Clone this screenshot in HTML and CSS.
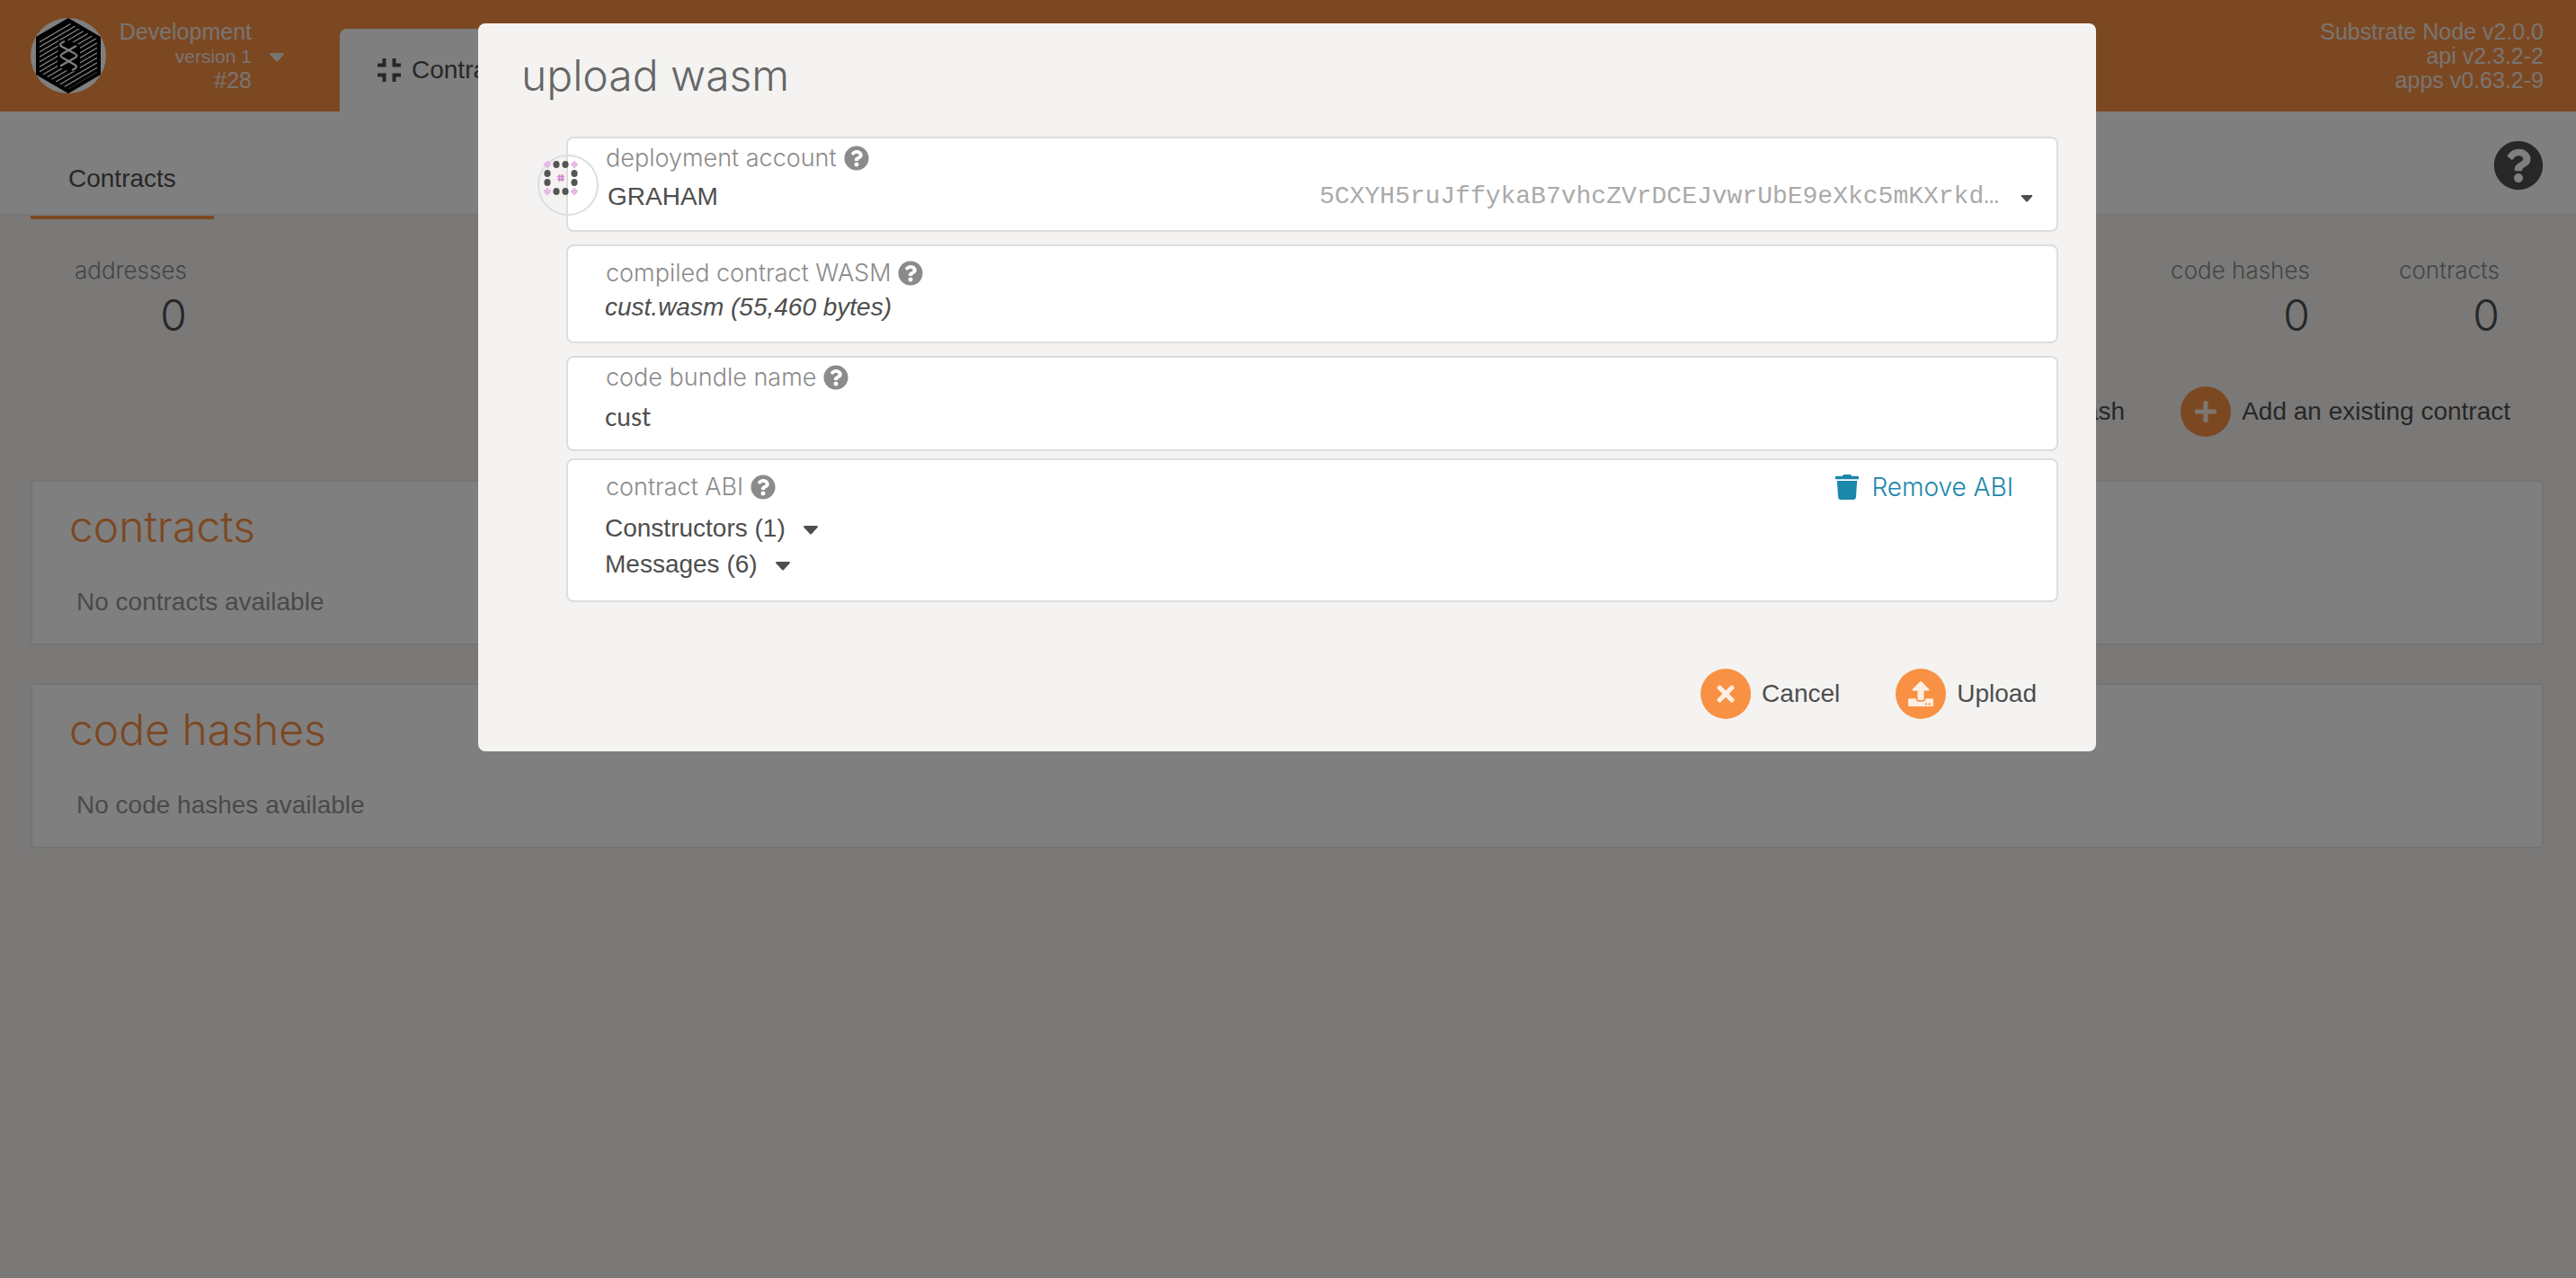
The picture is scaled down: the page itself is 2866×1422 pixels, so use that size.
FILE: index.html
```html
<!DOCTYPE html>
<html lang="en">
<head>
<meta charset="utf-8">
<title>Contracts</title>
<link rel="stylesheet" href="styles.css">
</head>
<body>
<svg class="defs" width="0" height="0" aria-hidden="true">
  <symbol id="help" viewBox="0 0 512 512"><path d="M504 256c0 136.997-111.043 248-248 248S8 392.997 8 256C8 119.083 119.043 8 256 8s248 111.083 248 248zM262.655 90c-54.497 0-89.255 22.957-116.549 63.758-3.536 5.286-2.353 12.415 2.715 16.258l34.699 26.31c5.205 3.947 12.621 3.008 16.665-2.122 17.864-22.658 30.113-35.797 57.303-35.797 20.429 0 45.698 13.148 45.698 32.958 0 14.976-12.363 22.667-32.534 33.976C247.128 238.528 216 254.941 216 296v4c0 6.627 5.373 12 12 12h56c6.627 0 12-5.373 12-12v-1.333c0-28.462 83.186-29.647 83.186-106.667 0-58.002-60.165-102-116.531-102zM256 338c-25.365 0-46 20.635-46 46 0 25.364 20.635 46 46 46s46-20.636 46-46c0-25.365-20.635-46-46-46z"/></symbol>
  <symbol id="plus" viewBox="0 0 448 512"><path d="M416 208H272V64c0-17.67-14.33-32-32-32h-32c-17.67 0-32 14.33-32 32v144H32c-17.67 0-32 14.33-32 32v32c0 17.67 14.33 32 32 32h144v144c0 17.67 14.33 32 32 32h32c17.67 0 32-14.33 32-32V304h144c17.67 0 32-14.33 32-32v-32c0-17.67-14.33-32-32-32z"/></symbol>
  <symbol id="caret" viewBox="0 0 16 10"><path d="M1 0h14q1.500 .5 .5 2L9 9q-1 1-2 0L.5 2Q-.5.500 1 0z"/></symbol>
</svg>

<header class="topbar">
  <button class="chain" type="button">
    <svg class="logo" viewBox="0 0 84 84" aria-hidden="true">
      <defs><clipPath id="hex"><path d="M42 5L74 23.500V60.500L42 79 10 60.500V23.500z"/></clipPath></defs>
      <circle cx="42" cy="42" r="42" fill="#fff"/>
      <path d="M42 0L78 21V63L42 84 6 63V21z"/>
      <g clip-path="url(#hex)" stroke="#fff" stroke-width="1.300">
        <path d="M6 29L78-13M6 34.500L78-7.500M6 40L78-2M6 45.500L78 3.500M6 51L78 9M6 56.500L78 14.500M6 62L78 20M6 67.500L78 25.500M6 73L78 31M6 78.500L78 36.500M6 84L78 42M6 89.500L78 47.500M6 95L78 53M6 100.500L78 58.500"/>
        <path d="M31 25L40 24 55 30V58L44 60 30 54z" fill="#000" stroke="none"/>
        <path d="M38 26Q30 29 35 32L49 39.500Q54 42 49 44.500L33 53.500M51 31L36 39.500Q31 42 36 44.500L49 52Q54 55 46 58" fill="none" stroke-width="2.200"/>
      </g>
    </svg>
    <span class="chain-info">
      <span>Development</span>
      <span class="version">version 1</span>
      <span>#28</span>
    </span>
    <svg class="caret" aria-hidden="true"><use href="#caret"/></svg>
  </button>
  <a class="app-tab" href="#">
    <svg class="app-icon" viewBox="0 0 26 26" aria-hidden="true"><path d="M0 7.500H7.500V0M18.500 0V7.500H26M0 18.500H7.500V26M18.500 26V18.500H26" fill="none" stroke="currentColor" stroke-width="4"/></svg>
    <span>Contracts</span>
  </a>
  <div class="node-info">
    <span>Substrate Node v2.0.0</span>
    <span>api v2.3.2-2</span>
    <span>apps v0.63.2-9</span>
  </div>
</header>

<nav class="subnav">
  <a class="subtab" href="#">Contracts</a>
  <button class="help-button" type="button" aria-label="Help"><svg aria-hidden="true"><use href="#help"/></svg></button>
</nav>

<main class="page">
  <section class="summary">
    <div class="stat"><span class="stat-label">addresses</span><span class="stat-value">0</span></div>
    <div class="stat-group">
      <div class="stat"><span class="stat-label">code hashes</span><span class="stat-value">0</span></div>
      <div class="stat"><span class="stat-label">contracts</span><span class="stat-value">0</span></div>
    </div>
  </section>
  <div class="actions page-actions">
    <button class="action" type="button"><span class="disc"><svg class="plus" aria-hidden="true"><use href="#plus"/></svg></span>Add an existing code hash</button>
    <button class="action" type="button"><span class="disc"><svg class="plus" aria-hidden="true"><use href="#plus"/></svg></span>Add an existing contract</button>
  </div>
  <section class="card">
    <h2>contracts</h2>
    <p>No contracts available</p>
  </section>
  <section class="card">
    <h2>code hashes</h2>
    <p>No code hashes available</p>
  </section>
</main>

<div class="backdrop">
  <form class="modal" role="dialog" aria-modal="true" aria-labelledby="modal-title">
    <h1 id="modal-title">upload wasm</h1>
    <div class="fields">
      <div class="field field-account">
        <svg class="identicon" viewBox="0 0 68 68" aria-hidden="true">
          <circle cx="34" cy="34" r="33" fill="none" stroke="#ddd" stroke-width="2"/>
          <g fill="#e9b8e6"><path d="M11 6.500l4.500 4.500-4.500 4.500L6.500 11zM41 6.500l4.500 4.500-4.500 4.500L36.500 11zM11 36.500l4.500 4.500-4.500 4.500L6.500 41zM41 36.500l4.500 4.500-4.500 4.500L36.500 41z"/></g>
          <g fill="#555">
            <ellipse cx="21" cy="11" rx="3.600" ry="4"/><ellipse cx="31" cy="11" rx="3.600" ry="4"/>
            <ellipse cx="11" cy="21" rx="3.600" ry="4"/><ellipse cx="41" cy="21" rx="3.600" ry="4"/>
            <ellipse cx="11" cy="31" rx="3.600" ry="4"/><ellipse cx="41" cy="31" rx="3.600" ry="4"/>
            <ellipse cx="21" cy="41" rx="3.600" ry="4"/><ellipse cx="31" cy="41" rx="3.600" ry="4"/>
          </g>
          <path d="M24.500 22v8M27.500 22v8M22 24.500h8M22 27.500h8" stroke="#d680d0" stroke-width="1.600"/>
        </svg>
        <div class="label-row"><label for="account">deployment account</label><svg class="hint" aria-hidden="true"><use href="#help"/></svg></div>
        <div class="account-row">
          <select id="account"><option>GRAHAM</option></select>
          <span class="address">5CXYH5ruJffykaB7vhcZVrDCEJvwrUbE9eXkc5mKXrkd…</span>
          <svg class="caret" aria-hidden="true"><use href="#caret"/></svg>
        </div>
      </div>
      <div class="field field-file">
        <div class="label-row"><label for="wasm">compiled contract WASM</label><svg class="hint" aria-hidden="true"><use href="#help"/></svg></div>
        <button id="wasm" class="file" type="button">cust.wasm (55,460 bytes)</button>
      </div>
      <div class="field field-name">
        <div class="label-row"><label for="name">code bundle name</label><svg class="hint" aria-hidden="true"><use href="#help"/></svg></div>
        <input id="name" type="text" value="cust">
      </div>
      <div class="field field-abi">
        <div class="label-row"><span>contract ABI</span><svg class="hint" aria-hidden="true"><use href="#help"/></svg>
          <a class="remove" href="#"><svg viewBox="0 0 448 512" preserveAspectRatio="none" aria-hidden="true"><path d="M432 32H312l-9.400-18.700A24 24 0 0 0 281.100 0H166.800a23.720 23.720 0 0 0-21.400 13.300L136 32H16A16 16 0 0 0 0 48v32a16 16 0 0 0 16 16h416a16 16 0 0 0 16-16V48a16 16 0 0 0-16-16zM32 128l21.200 339a48 48 0 0 0 47.900 45h245.800a48 48 0 0 0 47.900-45L416 128z"/></svg>Remove ABI</a>
        </div>
        <button class="expander" type="button">Constructors (1)<svg class="caret" aria-hidden="true"><use href="#caret"/></svg></button>
        <button class="expander" type="button">Messages (6)<svg class="caret" aria-hidden="true"><use href="#caret"/></svg></button>
      </div>
    </div>
    <div class="actions modal-actions">
      <button class="action" type="button"><span class="disc"><svg class="cross" viewBox="0 0 352 512" aria-hidden="true"><path d="M242.720 256l100.070-100.070c12.280-12.280 12.280-32.190 0-44.480l-22.240-22.240c-12.280-12.280-32.190-12.280-44.480 0L176 189.280 75.930 89.210c-12.280-12.280-32.190-12.280-44.480 0L9.210 111.450c-12.280 12.280-12.280 32.190 0 44.480L109.280 256 9.210 356.070c-12.280 12.280-12.280 32.190 0 44.480l22.240 22.240c12.280 12.280 32.200 12.280 44.480 0L176 322.720l100.070 100.070c12.280 12.280 32.200 12.280 44.480 0l22.240-22.240c12.280-12.280 12.280-32.190 0-44.480L242.720 256z"/></svg></span>Cancel</button>
      <button class="action" type="submit"><span class="disc"><svg class="upload" viewBox="0 0 512 512" aria-hidden="true"><path d="M296 384h-80c-13.300 0-24-10.700-24-24V192h-87.700c-17.800 0-26.700-21.500-14.100-34.100L242.300 5.700c7.500-7.500 19.800-7.500 27.300 0l152.200 152.200c12.600 12.600 3.700 34.100-14.100 34.100H320v168c0 13.300-10.700 24-24 24zm216-8v112c0 13.300-10.700 24-24 24H24c-13.300 0-24-10.700-24-24V376c0-13.300 10.700-24 24-24h136v8c0 30.900 25.100 56 56 56h80c30.900 0 56-25.100 56-56v-8h136c13.300 0 24 10.700 24 24zm-124 88c0-11-9-20-20-20s-20 9-20 20 9 20 20 20 20-9 20-20zm64 0c0-11-9-20-20-20s-20 9-20 20 9 20 20 20 20-9 20-20z"/></svg></span>Upload</button>
    </div>
  </form>
</div>
</body>
</html>
```
FILE: styles.css
```css
:root {
  --orange: #f89144;
  --text: #4e4e4e;
  --muted: #8b8b8b;
  --bg: #f4f3f1;
  --line: #ddd;
  --light: Inter, "Liberation Sans", sans-serif;
}

* {
  box-sizing: border-box;
}

body {
  margin: 0;
  min-height: 100vh;
  background: var(--bg);
  color: var(--text);
  font: 28px/36px "Liberation Sans", Arial, sans-serif;
}

button,
input,
select {
  margin: 0;
  padding: 0;
  border: 0;
  background: none;
  color: inherit;
  font: inherit;
  text-align: left;
}

a {
  color: inherit;
  text-decoration: none;
}

svg {
  flex: none;
  fill: currentColor;
}

.defs {
  position: absolute;
}

.caret {
  width: 16px;
  height: 10px;
  margin-top: 4px;
}

/* Header */

.topbar {
  display: flex;
  align-items: flex-end;
  height: 124px;
  padding: 0 36px 0 34px;
  background: var(--orange);
}

.chain {
  display: flex;
  align-self: center;
  width: 344px;
  align-items: center;
  color: #f4e8e0;
}

.logo {
  width: 84px;
  height: 84px;
  color: #000;
}

.chain-info,
.node-info {
  display: flex;
  flex-direction: column;
  text-align: right;
  font-size: 25px;
  line-height: 27px;
}

.chain-info {
  width: 162px;
  margin-right: 20px;
}

.version {
  font-size: 21px;
}

.app-tab {
  display: flex;
  align-items: center;
  gap: 12px;
  height: 92px;
  padding: 0 42px;
  border-radius: 8px 8px 0 0;
  background: #fff;
}

.app-icon {
  width: 26px;
  height: 26px;
}

.node-info {
  align-self: center;
  margin-left: auto;
  color: #f4e8e0;
}

.subnav {
  display: flex;
  justify-content: space-between;
  height: 116px;
  padding: 0 36px 0 34px;
  border-bottom: 2px solid #ececec;
  background: #fff;
}

.subtab {
  height: 120px;
  padding: 57px 42px 0;
  border-bottom: 4px solid var(--orange);
}

.help-button {
  align-self: center;
  height: 56px;
  margin-top: 6px;
}

.help-button svg {
  display: block;
  width: 56px;
  height: 56px;
}

/* Page body */

.page {
  padding: 43px 36px 0 34px;
}

.summary {
  display: flex;
  justify-content: space-between;
  padding: 0 49px;
}

.stat-group {
  display: flex;
  gap: 99px;
}

.stat {
  display: flex;
  flex-direction: column;
  gap: 4px;
  text-align: right;
  font-family: var(--light);
  font-weight: 300;
}

.stat-label {
  color: var(--muted);
  font-size: 26px;
}

.stat-value {
  font-size: 48px;
  line-height: 56px;
}

.actions {
  display: flex;
  justify-content: flex-end;
  gap: 62px;
}

.page-actions {
  margin: 51px 0 48px;
  padding-right: 37px;
}

.modal-actions {
  padding-right: 24px;
}

.action {
  display: flex;
  align-items: center;
  gap: 12px;
}

.disc {
  display: flex;
  align-items: center;
  justify-content: center;
  width: 56px;
  height: 56px;
  border-radius: 50%;
  background: var(--orange);
  color: #fdeee2;
}

.plus {
  width: 24px;
  height: 28px;
}

.cross {
  width: 20px;
  height: 28px;
}

.upload {
  width: 28px;
  height: 28px;
}

.card {
  margin-bottom: 42px;
  padding: 20px 41px;
  border: 2px solid #e8e8e8;
  border-radius: 4px;
  background: #fff;
}

h1,
h2 {
  margin: 0;
  font-family: var(--light);
  font-size: 48px;
  font-weight: 300;
  line-height: 60px;
}

h2 {
  color: var(--orange);
}

.card p {
  margin: 36px 0 8px;
  padding-left: 8px;
  color: #949494;
}

/* Dialog */

.backdrop {
  position: fixed;
  inset: 0;
  padding: 26px 34px 26px 32px;
  overflow: auto;
  background: rgba(0, 0, 0, 0.5);
}

.modal {
  max-width: 1800px;
  margin: 0 auto;
  padding: 28px 42px 36px 48px;
  border-radius: 8px;
  background: var(--bg);
}

.modal h1 {
  color: #666;
}

.fields {
  padding: 38px 0 74px 50px;
}

.field {
  position: relative;
  margin-bottom: 14px;
  padding: 4px 48px 0 41px;
  border: 2px solid var(--line);
  border-radius: 8px;
  background: #fff;
}

.label-row {
  display: flex;
  align-items: center;
  gap: 8px;
  padding-left: 1px;
  color: var(--muted);
  font-family: var(--light);
  font-size: 27px;
  font-weight: 300;
}

.hint {
  width: 28px;
  height: 28px;
}

.identicon {
  position: absolute;
  left: -34px;
  top: 18px;
  width: 68px;
  height: 68px;
}

.field-account {
  padding-right: 26px;
  padding-bottom: 12px;
}

.account-row {
  display: flex;
  align-items: center;
  height: 50px;
}

.account-row select {
  flex: 1;
  min-width: 0;
  height: 36px;
  padding-left: 3px;
  appearance: none;
}

.account-row .caret {
  width: 14px;
  height: 8px;
}

.address {
  margin-right: 24px;
  color: #aaa;
  font-family: "Liberation Mono", "Courier New", monospace;
}

.field-file {
  padding-top: 12px;
  padding-bottom: 18px;
}

.file {
  display: block;
  height: 40px;
  font-style: italic;
}

.field-name {
  margin-bottom: 8px;
  padding-bottom: 12px;
}

.field-name input {
  display: block;
  width: 100%;
  height: 50px;
  font-family: Lato, sans-serif;
}

.field-abi {
  margin-bottom: 0;
  padding-top: 12px;
  padding-bottom: 20px;
}

.remove {
  display: flex;
  align-items: center;
  gap: 14px;
  margin-left: auto;
  color: #1a87ab;
  font-size: 28px;
}

.remove svg {
  width: 26px;
  height: 28px;
}

.expander {
  display: flex;
  align-items: center;
  gap: 20px;
  height: 40px;
}

.expander:first-of-type {
  margin-top: 8px;
}
```
